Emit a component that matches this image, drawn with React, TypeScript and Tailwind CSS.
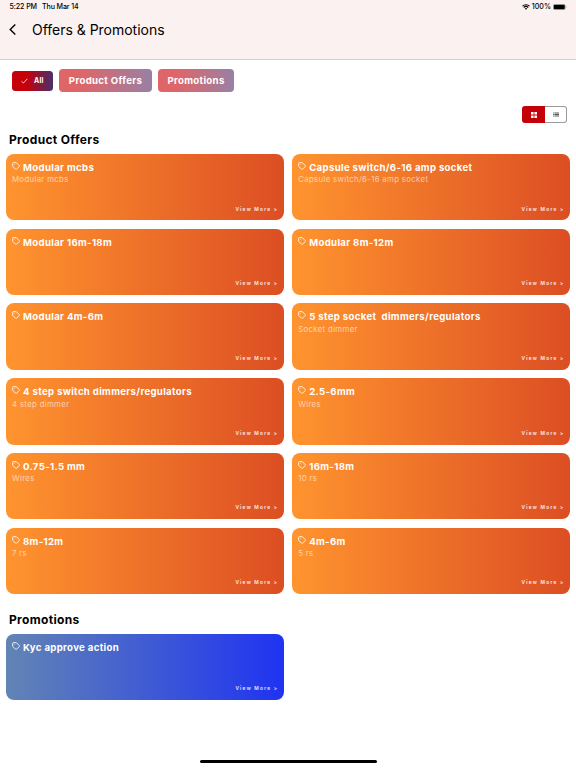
import React from "react";

type Offer = { title: string; note?: string };

const offers: Offer[] = [
  { title: "Modular mcbs", note: "Modular mcbs" },
  { title: "Capsule switch/6-16 amp socket", note: "Capsule switch/6-16 amp socket" },
  { title: "Modular 16m-18m" },
  { title: "Modular 8m-12m" },
  { title: "Modular 4m-6m" },
  { title: "5 step socket  dimmers/regulators", note: "Socket dimmer" },
  { title: "4 step switch dimmers/regulators", note: "4 step dimmer" },
  { title: "2.5-6mm", note: "Wires" },
  { title: "0.75-1.5 mm", note: "Wires" },
  { title: "16m-18m", note: "10 rs" },
  { title: "8m-12m", note: "7 rs" },
  { title: "4m-6m", note: "5 rs" },
];

function TagIcon() {
  return (
    <svg className="h-2 w-2 shrink-0" viewBox="0 0 24 24" fill="none" stroke="currentColor" strokeWidth="2.6" strokeLinejoin="round">
      <path d="M2 4a2 2 0 0 1 2-2h8.2a2 2 0 0 1 1.4.6l8.2 8.2a2 2 0 0 1 0 2.8l-8.2 8.2a2 2 0 0 1-2.8 0l-8.2-8.2a2 2 0 0 1-.6-1.4Z" />
      <circle cx="7" cy="7" r="1.2" fill="currentColor" stroke="none" />
    </svg>
  );
}

function Card({ offer, tone }: { offer: Offer; tone: "orange" | "blue" }) {
  const fill =
    tone === "orange"
      ? "bg-linear-to-r/srgb from-[#ff942f] to-[#dc4e23]"
      : "bg-linear-to-r/srgb from-[#6284b4] to-[#1f33f2]";
  return (
    <div className={`flex h-[66.3px] flex-col rounded-[8px] pl-[6px] pr-[5.5px] pt-[8px] text-white ${fill}`}>
      <div className="flex items-start gap-[3px]">
        <TagIcon />
        <h3 className="whitespace-pre text-[9.6px] font-bold leading-[12px] tracking-[0.34px]">{offer.title}</h3>
      </div>
      {offer.note && <p className="-mt-[0.6px] whitespace-pre text-[7.8px] leading-[12px] tracking-[0.33px] text-white/60">{offer.note}</p>}
      <span className="mb-[8.8px] mt-auto self-end text-[4.8px] font-semibold leading-[6px] tracking-[1.25px] text-white/90">View More &gt;</span>
    </div>
  );
}

export default function App() {
  return (
    <div className="flex h-[768px] w-[576px] flex-col overflow-hidden bg-white font-['Inter','Liberation_Sans',sans-serif] text-black">
      <header className="h-[60px] shrink-0 border-b border-[#d5cfcf] bg-[#fbf1f0]">
        <div className="flex h-[14px] items-center justify-between pl-[9.5px] pr-[9px] pt-px text-[7.1px] font-medium">
          <div className="flex gap-[6px]">
            <span className="w-[26.5px] whitespace-nowrap tracking-[-0.1px]">5:22 PM</span>
            <span className="tracking-[-0.12px]">Thu Mar 14</span>
          </div>
          <div className="flex items-center gap-[2px]">
            <svg className="h-[6px] w-[8px]" viewBox="0 0 16 12" fill="none" stroke="black" strokeWidth="2.1">
              <path d="M1 4.2a10 10 0 0 1 14 0M3.5 7a6.5 6.5 0 0 1 9 0" />
              <path d="M5.5 9a3.6 3.6 0 0 1 5 0L8 11.7Z" fill="black" stroke="none" />
            </svg>
            <span>100%</span>
            <svg className="h-[6px] w-[14px]" viewBox="0 0 28 12">
              <rect x=".5" y=".5" width="24" height="11" rx="3" fill="none" stroke="#777" />
              <rect x="1.5" y="1.5" width="22" height="9" rx="2" />
              <path d="M26 4q1.8 2 0 4Z" fill="#777" />
            </svg>
          </div>
        </div>
        <div className="flex h-[31px] items-center pl-[9px]">
          <svg className="h-[11px] w-[7px]" viewBox="0 0 7 11" fill="none" stroke="black" strokeWidth="1.4">
            <path d="M6.3.6 1.2 5.5l5.1 4.9" />
          </svg>
          <h1 className="ml-[16px] text-[14px] leading-[20px] tracking-[-0.02px]">Offers &amp; Promotions</h1>
        </div>
      </header>

      <nav className="mt-[9px] flex h-[23px] shrink-0 items-center pl-[11.5px] font-bold text-white">
        <button className="flex h-[20px] w-[41px] items-center rounded-[3.5px] bg-linear-to-r/srgb from-[#c60008] from-35% to-[#49306d] pl-[9.5px] pt-px text-[7px] tracking-[0.2px]">
          <svg className="mr-[6px] h-[6px] w-[7px]" viewBox="0 0 7 6" fill="none" stroke="white" strokeWidth=".8">
            <path d="M.5 3.2 2.4 5 6.4.8" />
          </svg>
          All
        </button>
        <button className="ml-[6.8px] h-[23px] w-[92.5px] rounded-[4px] bg-linear-to-r/srgb from-[#de6669] from-25% to-[#9980a5] pt-px text-[9.6px] tracking-[0.34px]">Product Offers</button>
        <button className="ml-[6.5px] h-[23px] w-[75.5px] rounded-[4px] bg-linear-to-r/srgb from-[#de6669] from-25% to-[#9980a5] pt-px text-[9.6px] tracking-[0.34px]">Promotions</button>
      </nav>

      <div className="mr-[9px] mt-[14px] flex h-[17px] w-[45px] shrink-0 self-end">
        <div className="flex w-[23px] items-center justify-center rounded-l-[3px] bg-[#c40009]">
          <svg className="h-[6px] w-[6px]" viewBox="0 0 6 6" fill="white">
            <path d="M0 0h2.6v2.6H0zM3.4 0H6v2.6H3.4zM0 3.4h2.6V6H0zM3.4 3.4H6V6H3.4z" />
          </svg>
        </div>
        <div className="flex flex-1 items-center justify-center rounded-r-[3px] border border-l-0 border-[#9b9b9b]">
          <svg className="h-[5px] w-[6px]" viewBox="0 0 6 5" fill="none" stroke="#444" strokeWidth=".9">
            <path d="M0 1h.8M1.4 1H6M0 2.5h.8M1.4 2.5H6M0 4h.8M1.4 4H6" />
          </svg>
        </div>
      </div>

      <main className="px-[6px] pt-[9px]">
        <h2 className="pl-[3px] text-[12px] font-bold leading-[16px] tracking-[0.34px]">Product Offers</h2>
        <section className="mt-[6px] grid grid-cols-2 gap-x-[8.4px] gap-y-[8.45px]">
          {offers.map((offer) => (
            <Card key={offer.title} offer={offer} tone="orange" />
          ))}
        </section>
        <h2 className="mt-[18px] pl-[3px] text-[12px] font-bold leading-[16px] tracking-[0.34px]">Promotions</h2>
        <section className="mt-[6px] grid grid-cols-2 gap-x-[8.4px]">
          <Card offer={{ title: "Kyc approve action" }} tone="blue" />
        </section>
      </main>

      <div className="mb-[5px] mt-auto h-[3px] w-[177px] shrink-0 self-center rounded-full bg-black" />
    </div>
  );
}
